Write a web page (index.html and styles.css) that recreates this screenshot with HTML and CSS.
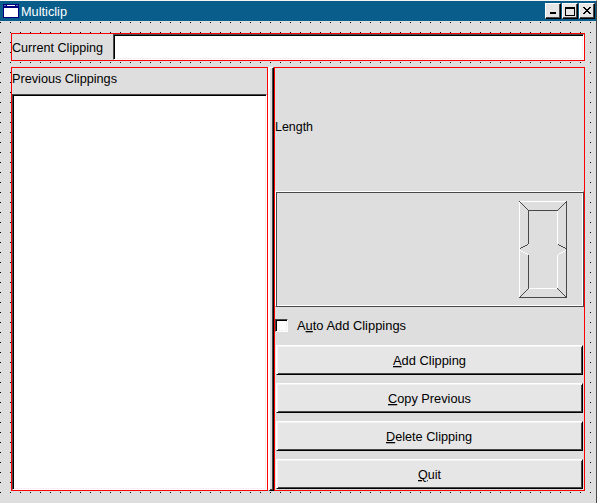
FILE: index.html
```html
<!DOCTYPE html>
<html lang="en">
<head>
<meta charset="utf-8">
<title>Multiclip</title>
<link rel="stylesheet" href="styles.css">
</head>
<body>
<div class="window">
  <header class="titlebar">
    <svg class="app-icon" width="16" height="14" viewBox="0 0 16 14" shape-rendering="crispEdges">
      <rect width="16" height="14" fill="#000080"/>
      <rect x="1" y="4" width="14" height="9" fill="#fff"/>
      <rect x="4" y="1" width="8" height="1" fill="#fff"/>
      <rect x="1" y="1" width="2" height="1" fill="#5078c0"/>
      <rect x="13" y="1" width="2" height="1" fill="#5078c0"/>
    </svg>
    <h1 class="title"><svg class="t" width="60" height="18"><text x="0" y="13" textLength="46" lengthAdjust="spacingAndGlyphs">Multiclip</text></svg></h1>
    <div class="controls">
      <button class="control"><svg width="12" height="12" shape-rendering="crispEdges"><rect x="3" y="8" width="6" height="2"/></svg></button>
      <button class="control"><svg width="12" height="12" shape-rendering="crispEdges"><path d="M1 3h10v9H1zM2 5v6h8V5z" fill-rule="evenodd"/></svg></button>
      <button class="control"><svg width="12" height="12" shape-rendering="crispEdges"><path d="M2 3h2v1h1v1h2V4h1V3h2v1H9v1H8v1H7v1h1v1h1v1h1v1H8V9H7V8H5v1H4v1H2V9h1V8h1V7h1V6H4V5H3V4H2z"/></svg></button>
    </div>
  </header>
  <main class="form">
    <section class="current">
      <label class="current-label"><svg class="t" width="100" height="18"><text x="0" y="13" textLength="91" lengthAdjust="spacingAndGlyphs">Current Clipping</text></svg></label>
      <div class="field"></div>
    </section>
    <div class="split">
      <section class="previous">
        <div class="previous-label"><svg class="t" width="120" height="18"><text x="0" y="13" textLength="105" lengthAdjust="spacingAndGlyphs">Previous Clippings</text></svg></div>
        <div class="field list"></div>
      </section>
      <div class="splitter"></div>
      <section class="side">
        <div class="length"><svg class="t" width="60" height="18"><text x="0" y="13" textLength="38" lengthAdjust="spacingAndGlyphs">Length</text></svg></div>
        <div class="lcd">
          <svg width="48" height="97" viewBox="0 0 48 97" shape-rendering="crispEdges" fill="none">
            <path d="M0 .5H48M.5 1V96M38.5 10V43M38.5 54V87M9 87.5H39" stroke="#fff"/>
            <path d="M47.5 1V97M0 96.5H48M9 9.5H39M9.5 10V43M9.5 54V87" stroke="#484848"/>
            <path d="M.5 .5L9.5 9.5M47.5 .5L38.5 9.5M.5 96.5L9.5 87.5M47.5 96.5L38.5 87.5M9 43.5L1 47.5M39 43.5L47 47.5" stroke="#484848"/>
            <path d="M1 49.5L9 53.5M47 49.5L39 53.5" stroke="#fff"/>
          </svg>
        </div>
        <label class="check"><span class="box"></span><svg class="t" width="120" height="18"><text x="0" y="13" textLength="109" lengthAdjust="spacingAndGlyphs">A<tspan class="u">u</tspan>to Add Clippings</text></svg></label>
        <div class="buttons">
          <button class="button"><svg class="t" width="73" height="18"><text x="0" y="13" textLength="73" lengthAdjust="spacingAndGlyphs"><tspan class="u">A</tspan>dd Clipping</text></svg></button>
          <button class="button"><svg class="t" width="83" height="18"><text x="0" y="13" textLength="83" lengthAdjust="spacingAndGlyphs"><tspan class="u">C</tspan>opy Previous</text></svg></button>
          <button class="button"><svg class="t" width="87" height="18"><text x="0" y="13" textLength="86" lengthAdjust="spacingAndGlyphs"><tspan class="u">D</tspan>elete Clipping</text></svg></button>
          <button class="button"><svg class="t" width="24" height="18"><text x="0" y="13" textLength="23" lengthAdjust="spacingAndGlyphs"><tspan class="u">Q</tspan>uit</text></svg></button>
        </div>
      </section>
    </div>
  </main>
</div>
</body>
</html>
```
FILE: styles.css
```css
* { box-sizing: border-box; }
body { margin: 0; background: #dedede; color: #000; font: 13px "Liberation Sans", Arial, sans-serif; }
button { margin: 0; padding: 0; font: inherit; color: inherit; border-radius: 0; }
svg { display: block; flex: none; }
.t { overflow: visible; fill: currentColor; }
.u { text-decoration: underline 1px; text-underline-offset: 1px; text-decoration-skip-ink: none; }
.window { width: 597px; height: 503px; border-top: 1px solid #f4f4f4; border-right: 1px solid #484848; background: #dedede; }
.titlebar { display: flex; height: 20px; padding-left: 3px; background: #085d8b; color: #fff; }
.app-icon { margin-top: 3px; }
.title { flex: 1; margin: 2px 0 0 2px; font: inherit; }
.controls { display: flex; gap: 1px; padding: 2px 1px 0 0; }
.control { display: flex; justify-content: center; width: 16px; height: 16px; background: #e6e6e6; border: 1px solid; border-color: #fff #000 #000 #fff; box-shadow: inset -1px -1px #484848; }
.form { height: 480px; padding: 12px 11px 0; background: conic-gradient(from 0deg at 1px 1px, transparent 270deg, #000 270deg) 0 1px / 10px 10px; }
.current { display: flex; height: 28px; border: 1px solid #f00; background: #dedede; }
.current-label { width: 101px; padding-top: 5px; }
.field { flex: 1; background: #fff; border: 1px solid; border-color: #484848 #fff #fff #484848; box-shadow: inset 1px 1px #000, inset -1px -1px #f4f0f4; }
.split { display: flex; height: 424px; margin-top: 6px; }
.previous { display: flex; flex-direction: column; width: 257px; border: 1px solid #f00; background: #dedede; }
.previous-label { height: 26px; padding-top: 2px; }
.splitter { width: 6px; border: solid; border-width: 1px 1px 1px 2px; border-color: #fff #000 #000 #fff; box-shadow: inset -1px -1px #484848; background: #dedede; }
.side { display: flex; flex-direction: column; width: 311px; border: 1px solid #f00; background: #dedede; }
.length { height: 123px; padding-top: 50px; }
.lcd { display: flex; justify-content: flex-end; height: 116px; padding: 9px 16px 0 0; border: 1px solid; border-color: #fff #484848 #484848 #fff; box-shadow: inset 1px 1px #484848, inset -1px -1px #fff; }
.check { display: flex; height: 37px; padding-top: 10px; }
.box { width: 13px; height: 13px; margin: 2px 9px 0 0; background: #fff; border: 1px solid; border-color: #484848 #fff #fff #484848; box-shadow: inset 1px 1px #000, inset -1px -1px #f4f0f4; }
.buttons { display: grid; gap: 8px; padding: 1px 1px 0 1px; }
.button { display: flex; justify-content: center; height: 30px; padding-top: 6px; background: #e6e6e6; border: 1px solid; border-color: #fff #000 #000 #fff; box-shadow: inset 1px 1px #f4f0f4, inset -1px -1px #484848; }
```
